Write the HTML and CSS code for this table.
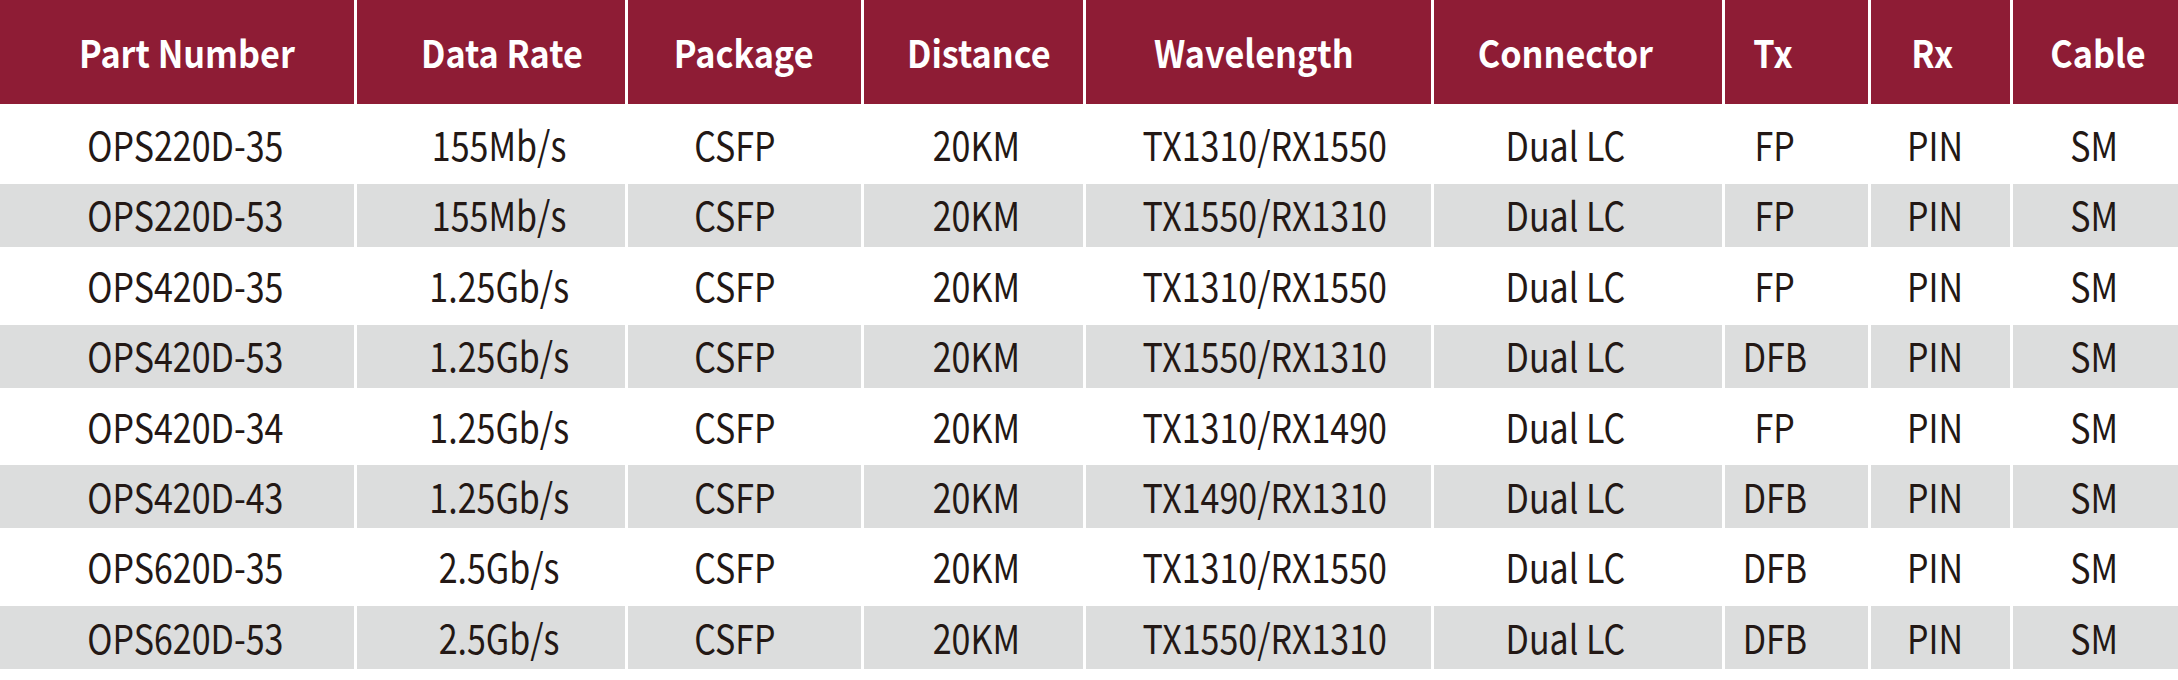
FILE: index.html
```html
<!DOCTYPE html>
<html lang="en">
<head>
<meta charset="utf-8">
<title>Part list</title>
<link rel="stylesheet" href="styles.css">
</head>
<body>
<div class="table">
  <div class="row head">
    <div class="cell"><span>Part Number</span></div>
    <div class="cell"><span>Data Rate</span></div>
    <div class="cell"><span>Package</span></div>
    <div class="cell"><span>Distance</span></div>
    <div class="cell"><span>Wavelength</span></div>
    <div class="cell"><span>Connector</span></div>
    <div class="cell"><span>Tx</span></div>
    <div class="cell"><span>Rx</span></div>
    <div class="cell"><span>Cable</span></div>
  </div>
  <div class="body">
    <div class="row">
      <div class="cell"><span>OPS220D-35</span></div><div class="cell"><span>155Mb/s</span></div><div class="cell"><span>CSFP</span></div><div class="cell"><span>20KM</span></div><div class="cell"><span>TX1310/RX1550</span></div><div class="cell"><span>Dual LC</span></div><div class="cell"><span>FP</span></div><div class="cell"><span>PIN</span></div><div class="cell"><span>SM</span></div>
    </div>
    <div class="row alt">
      <div class="cell"><span>OPS220D-53</span></div><div class="cell"><span>155Mb/s</span></div><div class="cell"><span>CSFP</span></div><div class="cell"><span>20KM</span></div><div class="cell"><span>TX1550/RX1310</span></div><div class="cell"><span>Dual LC</span></div><div class="cell"><span>FP</span></div><div class="cell"><span>PIN</span></div><div class="cell"><span>SM</span></div>
    </div>
    <div class="row">
      <div class="cell"><span>OPS420D-35</span></div><div class="cell"><span>1.25Gb/s</span></div><div class="cell"><span>CSFP</span></div><div class="cell"><span>20KM</span></div><div class="cell"><span>TX1310/RX1550</span></div><div class="cell"><span>Dual LC</span></div><div class="cell"><span>FP</span></div><div class="cell"><span>PIN</span></div><div class="cell"><span>SM</span></div>
    </div>
    <div class="row alt">
      <div class="cell"><span>OPS420D-53</span></div><div class="cell"><span>1.25Gb/s</span></div><div class="cell"><span>CSFP</span></div><div class="cell"><span>20KM</span></div><div class="cell"><span>TX1550/RX1310</span></div><div class="cell"><span>Dual LC</span></div><div class="cell"><span>DFB</span></div><div class="cell"><span>PIN</span></div><div class="cell"><span>SM</span></div>
    </div>
    <div class="row">
      <div class="cell"><span>OPS420D-34</span></div><div class="cell"><span>1.25Gb/s</span></div><div class="cell"><span>CSFP</span></div><div class="cell"><span>20KM</span></div><div class="cell"><span>TX1310/RX1490</span></div><div class="cell"><span>Dual LC</span></div><div class="cell"><span>FP</span></div><div class="cell"><span>PIN</span></div><div class="cell"><span>SM</span></div>
    </div>
    <div class="row alt">
      <div class="cell"><span>OPS420D-43</span></div><div class="cell"><span>1.25Gb/s</span></div><div class="cell"><span>CSFP</span></div><div class="cell"><span>20KM</span></div><div class="cell"><span>TX1490/RX1310</span></div><div class="cell"><span>Dual LC</span></div><div class="cell"><span>DFB</span></div><div class="cell"><span>PIN</span></div><div class="cell"><span>SM</span></div>
    </div>
    <div class="row">
      <div class="cell"><span>OPS620D-35</span></div><div class="cell"><span>2.5Gb/s</span></div><div class="cell"><span>CSFP</span></div><div class="cell"><span>20KM</span></div><div class="cell"><span>TX1310/RX1550</span></div><div class="cell"><span>Dual LC</span></div><div class="cell"><span>DFB</span></div><div class="cell"><span>PIN</span></div><div class="cell"><span>SM</span></div>
    </div>
    <div class="row alt">
      <div class="cell"><span>OPS620D-53</span></div><div class="cell"><span>2.5Gb/s</span></div><div class="cell"><span>CSFP</span></div><div class="cell"><span>20KM</span></div><div class="cell"><span>TX1550/RX1310</span></div><div class="cell"><span>Dual LC</span></div><div class="cell"><span>DFB</span></div><div class="cell"><span>PIN</span></div><div class="cell"><span>SM</span></div>
    </div>
  </div>
</div>
</body>
</html>
```
FILE: styles.css
```css
html, body {
  margin: 0;
  padding: 0;
  background: #ffffff;
}
body {
  width: 2178px;
  height: 680px;
  overflow: hidden;
  font-family: "Noto Sans CJK SC", "Noto Sans", sans-serif;
}
.table {
  display: flex;
  flex-direction: column;
  width: 2178px;
}
.row {
  display: grid;
  grid-template-columns: 354px 268px 233px 219px 345px 288px 143px 139px 165px;
  column-gap: 3px;
  height: 63px;
}
.cell {
  display: flex;
  align-items: center;
  justify-content: center;
  box-sizing: border-box;
  font-size: 40px;
  color: #231815;
  white-space: nowrap;
  background: #ffffff;
}
.cell span {
  display: inline-block;
  transform: scaleX(0.85);
  line-height: 1;
  margin-top: -2px;
}

/* body column text placement */
.body .cell:nth-child(1) { padding-left: 16px; }
.body .cell:nth-child(2) { padding-left: 16px; }
.body .cell:nth-child(3) { padding-right: 20px; }
.body .cell:nth-child(4) { padding-left: 6px; }
.body .cell:nth-child(5) { padding-left: 12px; }
.body .cell:nth-child(6) { padding-right: 26px; }
.body .cell:nth-child(7) { padding-right: 44px; }
.body .cell:nth-child(8) { padding-right: 12px; }
.body .cell:nth-child(9) { padding-right: 2px; }

.head {
  height: 104px;
  margin-bottom: 9.5px;
}
.head .cell {
  background: #8e1c35;
  color: #ffffff;
  font-weight: 700;
  font-size: 38px;
}
.head .cell span {
  transform: scaleX(0.9);
  margin-top: 0;
}
.head .cell:nth-child(1) { padding-left: 20px; }
.head .cell:nth-child(2) { padding-left: 22px; }
.head .cell:nth-child(3) { padding-right: 2px; }
.head .cell:nth-child(4) { padding-left: 10px; }
.head .cell:nth-child(5) { padding-right: 10px; }
.head .cell:nth-child(6) { padding-right: 26px; }
.head .cell:nth-child(7) { padding-right: 48px; }
.head .cell:nth-child(8) { padding-right: 16px; }
.head .cell:nth-child(9) { padding-left: 4px; }

.body {
  display: flex;
  flex-direction: column;
  gap: 7.4px;
}
.alt .cell {
  background: #dcdddd;
}
```
